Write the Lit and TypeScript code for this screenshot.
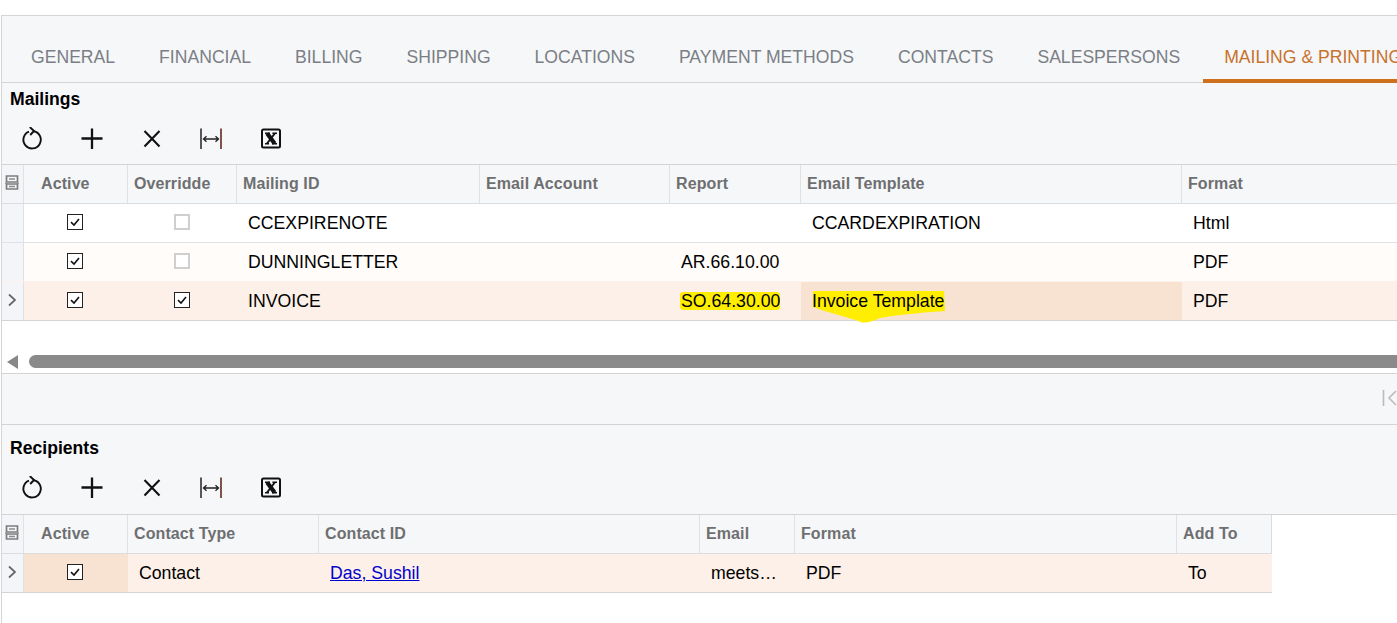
import { LitElement, html, css, svg } from "lit";
import { customElement } from "lit/decorators.js";

const refreshIcon = svg`<path d="M8 4.6A8.7 8.7 0 1 0 12.8 4.2" fill="none" stroke="#111" stroke-width="1.9"/><path d="M8.8 0 13 4 9.2 8" fill="none" stroke="#111" stroke-width="1.9"/>`;
const plusIcon = svg`<path d="M12 1.5V22M1.5 11.5H22.5" stroke="#111" stroke-width="2.3" fill="none"/>`;
const closeIcon = svg`<path d="M4.5 4 19.5 19.5M19.5 4 4.5 19.5" stroke="#111" stroke-width="2.1" fill="none"/>`;
const fitIcon = svg`<path d="M2 1.5V22" stroke="#222" stroke-width="1.5"/><path d="M22 1.5V22" stroke="#5a1a10" stroke-width="1.5"/><path d="M4.5 12H19.5M7.5 9.3 4.5 12 7.5 14.7M16.5 9.3 19.5 12 16.5 14.7" stroke="#222" stroke-width="1.3" fill="none"/>`;
const excelIcon = svg`<rect x="3" y="2.5" width="18" height="18" rx="1.5" fill="#f6f7f9" stroke="#111" stroke-width="2"/><path d="M8.2 6.5 15.6 16.5" stroke="#111" stroke-width="4.2" fill="none"/><path d="M15.8 6.5 8 16.5" stroke="#111" stroke-width="2" fill="none"/><path d="M6 6.2H11M13.4 6.2H18M6 16.8H10M13 16.8H18" stroke="#111" stroke-width="1.4" fill="none"/>`;
const gutterIcon = svg`<path d="M1.5 1H12.5V7H1.5ZM1.5 9H12.5V14H1.5Z" fill="none" stroke="#7d7d7d" stroke-width="1.7"/><path d="M1 7.5V9M13 7.5V9" stroke="#7d7d7d" stroke-width="1.2"/><path d="M4 4H10M4 11.5H10" stroke="#8d8d8d" stroke-width="1.5"/>`;

type Cell = { t?: string; check?: boolean; mark?: boolean; tpl?: boolean; link?: boolean; sel?: boolean };

const mailCols = "22px 104px 109px 243px 190px 131px 381px 1fr";
const recipCols = "22px 104px 191px 381px 95px 382px 95px";

const mailHeads = ["Active", "Overridde", "Mailing ID", "Email Account", "Report", "Email Template", "Format"];
const recipHeads = ["Active", "Contact Type", "Contact ID", "Email", "Format", "Add To"];

const mailRows: { cls: string; arrow?: boolean; cells: Cell[] }[] = [
  { cls: "low", cells: [{ check: true }, { check: false }, { t: "CCEXPIRENOTE" }, {}, {}, { t: "CCARDEXPIRATION" }, { t: "Html" }] },
  { cls: "warm low", cells: [{ check: true }, { check: false }, { t: "DUNNINGLETTER" }, {}, { t: "AR.66.10.00" }, {}, { t: "PDF" }] },
  { cls: "cur", arrow: true, cells: [{ check: true }, { check: true }, { t: "INVOICE" }, {}, { t: "SO.64.30.00", mark: true }, { t: "Invoice Template", tpl: true, sel: true }, { t: "PDF" }] },
];
const recipRows: { cls: string; arrow?: boolean; cells: Cell[] }[] = [
  { cls: "cur", arrow: true, cells: [{ check: true, sel: true }, { t: "Contact" }, { t: "Das, Sushil", link: true }, { t: "meets…" }, { t: "PDF" }, { t: "To" }] },
];

@customElement("app-root")
export class AppRoot extends LitElement {
  static styles = css`
    :host {
      display: block;
      width: 1397px;
      height: 623px;
      overflow: hidden;
      background: #fff;
      font-family: "Liberation Sans", Arial, sans-serif;
      color: #000;
    }
    .panel {
      margin: 15px 0 0 1px;
      height: 608px;
      border-top: 1px solid #d4d4d4;
      border-left: 1px solid #d4d4d4;
      box-sizing: border-box;
      overflow: hidden;
      background: #fff;
    }
    .tabs {
      display: flex;
      align-items: stretch;
      height: 67px;
      box-sizing: border-box;
      padding-left: 7px;
      padding-top: 26px;
      background: #f6f7f9;
      border-bottom: 1px solid #d4d4d4;
      white-space: nowrap;
      font-size: 17.6px;
      color: #7b7f85;
    }
    .tab {
      flex: none;
      padding: 0 22px;
      height: 40px;
      box-sizing: border-box;
      line-height: 30px;
    }
    .tab.on {
      color: #c8722c;
      border-bottom: 4px solid #cf701f;
      height: 41px;
      padding-left: 21px;
      margin-left: 1px;
    }
    .sec {
      background: #f6f7f9;
    }
    .title {
      height: 36px;
      padding-left: 8px;
      font-weight: 700;
      font-size: 17.6px;
      line-height: 32px;
    }
    .title.second {
      height: 43px;
      line-height: 46px;
    }
    .bar {
      display: flex;
      height: 45px;
      padding: 0 0 5px 1px;
      box-sizing: border-box;
      align-items: center;
    }
    .bar.second {
      height: 46px;
      padding-bottom: 7px;
    }
    .btn {
      width: 59.5px;
      display: flex;
      justify-content: center;
      flex: none;
    }
    .btn svg {
      width: 24px;
      height: 24px;
      display: block;
    }
    .grid {
      border-top: 1px solid #d4d4d4;
    }
    .row {
      display: grid;
      height: 39px;
      box-sizing: border-box;
      border-bottom: 1px solid #dfe1e4;
      background: #fff;
      align-items: stretch;
    }
    .row.head {
      background: #f6f7f9;
      border-bottom-color: #dadce0;
    }
    .row.warm { background: #fffcf9; border-bottom-color: #fdf3ec; }
    .row.cur { background: #fdf0e8; border-bottom-color: #d4d4d4; }
    .row.low .c:not(.box) { padding-top: 1px; }
    .recip .row { width: 1270px; }
    .recip .row.head { border-right: 1px solid #dadce0; }
    .recip { background: #fff; border-top: 1px solid #d4d4d4; height: 110px; }
    .gut {
      background: #f3f5f8;
      border-right: 1px solid #dfe1e4;
      display: flex;
      align-items: center;
      justify-content: center;
      padding-bottom: 3px;
      padding-right: 1px;
    }
    .gut svg { width: 15px; height: 15px; display: block; }
    .gut .chev { width: 10px; height: 14px; }
    .hc {
      display: flex;
      align-items: center;
      padding: 0 0 1px 6px;
      border-right: 1px solid #dfe1e4;
      font-weight: 700;
      font-size: 16px;
      color: #6e6f71;
      letter-spacing: 0.1px;
      white-space: nowrap;
      overflow: hidden;
    }
    .hc.first { padding-left: 17px; }
    .hc:last-child { border-right: none; }
    .c {
      display: flex;
      align-items: center;
      padding-left: 11px;
      font-size: 17.7px;
      white-space: nowrap;
      position: relative;
    }
    .c.sel { background: #f8e2d2; }
    .c.box { padding: 0 2px 3px 0; justify-content: center; }
    .c a { color: #0000cc; text-decoration: underline; }
    .cb {
      width: 16px;
      height: 16px;
      box-sizing: border-box;
      border: 1.5px solid #222;
      background: #fff;
      display: flex;
      align-items: center;
      justify-content: center;
    }
    .cb.off { border: 2px solid #cfcfcf; }
    .cb svg { width: 12px; height: 12px; display: block; }
    .mark {
      display: inline-block;
      background: #ffee00;
      line-height: 18px;
      border-radius: 3px;
      margin-left: -1px;
      padding: 0 0 0 1px;
    }
    .tpl { position: relative; z-index: 0; }
    .blob {
      position: absolute;
      left: 0;
      top: -1px;
      width: 133px;
      height: 33px;
      z-index: -1;
      display: block;
    }
    .scroll {
      height: 53px;
      box-sizing: border-box;
      border-bottom: 1px solid #d4d4d4;
      background: #fff;
      display: flex;
      align-items: flex-start;
      padding: 34px 0 0 5px;
    }
    .arrow {
      width: 0;
      height: 0;
      border-style: solid;
      border-width: 7px 11px 7px 0;
      border-color: transparent #888 transparent transparent;
      flex: none;
    }
    .thumb {
      margin-left: 11px;
      flex: 1;
      height: 13px;
      background: #8a8a8a;
      border-radius: 7px 0 0 7px;
    }
    .pager {
      height: 51px;
      box-sizing: border-box;
      background: #f6f7f9;
      border-bottom: 1px solid #d4d4d4;
      display: flex;
      justify-content: flex-end;
      align-items: center;
      padding-bottom: 3px;
    }
    .pager svg { width: 15px; height: 18px; display: block; }
  `;

  private renderBar(second = false) {
    const icons = [refreshIcon, plusIcon, closeIcon, fitIcon, excelIcon];
    return html`<div class="bar ${second ? "second" : ""}">
      ${icons.map((i) => html`<div class="btn"><svg viewBox="0 0 24 24">${i}</svg></div>`)}
    </div>`;
  }

  private renderCell(c: Cell) {
    if (c.check !== undefined) {
      return html`<div class="c box ${c.sel ? "sel" : ""}">
        <span class="cb ${c.check ? "" : "off"}">
          ${c.check
            ? html`<svg viewBox="0 0 12 12"><path d="M2 6.2 5 9 10 3" fill="none" stroke="#111" stroke-width="1.6"/></svg>`
            : ""}
        </span>
      </div>`;
    }
    let inner: unknown = c.t ?? "";
    if (c.link) inner = html`<a href="#">${c.t}</a>`;
    if (c.mark) inner = html`<span class="mark">${c.t}</span>`;
    if (c.tpl)
      inner = html`<span class="tpl">
        <svg class="blob" viewBox="0 0 133 33"><path d="M1 1H132L133 21C118 22 92 24 68 28 62 31 56 33 50 32.5 40 28 14 22 1 17Z" fill="#ffee00"/></svg>
        ${c.t}
      </span>`;
    return html`<div class="c ${c.sel ? "sel" : ""}">${inner}</div>`;
  }

  private renderGrid(cols: string, heads: string[], rows: typeof mailRows) {
    return html`
      <div class="row head" style="grid-template-columns:${cols}">
        <div class="gut"><svg viewBox="0 0 15 15">${gutterIcon}</svg></div>
        ${heads.map((h, i) => html`<div class="hc ${i === 0 ? "first" : ""}">${h}</div>`)}
      </div>
      ${rows.map(
        (r) => html`<div class="row ${r.cls}" style="grid-template-columns:${cols}">
          <div class="gut">
            ${r.arrow
              ? html`<svg class="chev" viewBox="0 0 10 14"><path d="M2 1.5 8 7 2 12.5" fill="none" stroke="#666" stroke-width="1.7"/></svg>`
              : ""}
          </div>
          ${r.cells.map((c) => this.renderCell(c))}
        </div>`
      )}
    `;
  }

  render() {
    const tabs = ["GENERAL", "FINANCIAL", "BILLING", "SHIPPING", "LOCATIONS", "PAYMENT METHODS", "CONTACTS", "SALESPERSONS", "MAILING & PRINTING"];
    return html`<div class="panel">
      <div class="tabs">
        ${tabs.map((t, i) => html`<div class="tab ${i === tabs.length - 1 ? "on" : ""}">${t}</div>`)}
      </div>
      <div class="sec">
        <div class="title">Mailings</div>
        ${this.renderBar()}
      </div>
      <div class="grid">${this.renderGrid(mailCols, mailHeads, mailRows)}</div>
      <div class="scroll"><span class="arrow"></span><span class="thumb"></span></div>
      <div class="pager">
        <svg viewBox="0 0 15 18"><path d="M1.5 1V17" stroke="#bbb" stroke-width="1.6"/><path d="M14 2 7 9 14 16" fill="none" stroke="#bbb" stroke-width="1.6"/></svg>
      </div>
      <div class="sec">
        <div class="title second">Recipients</div>
        ${this.renderBar(true)}
      </div>
      <div class="recip">${this.renderGrid(recipCols, recipHeads, recipRows)}</div>
    </div>`;
  }
}
